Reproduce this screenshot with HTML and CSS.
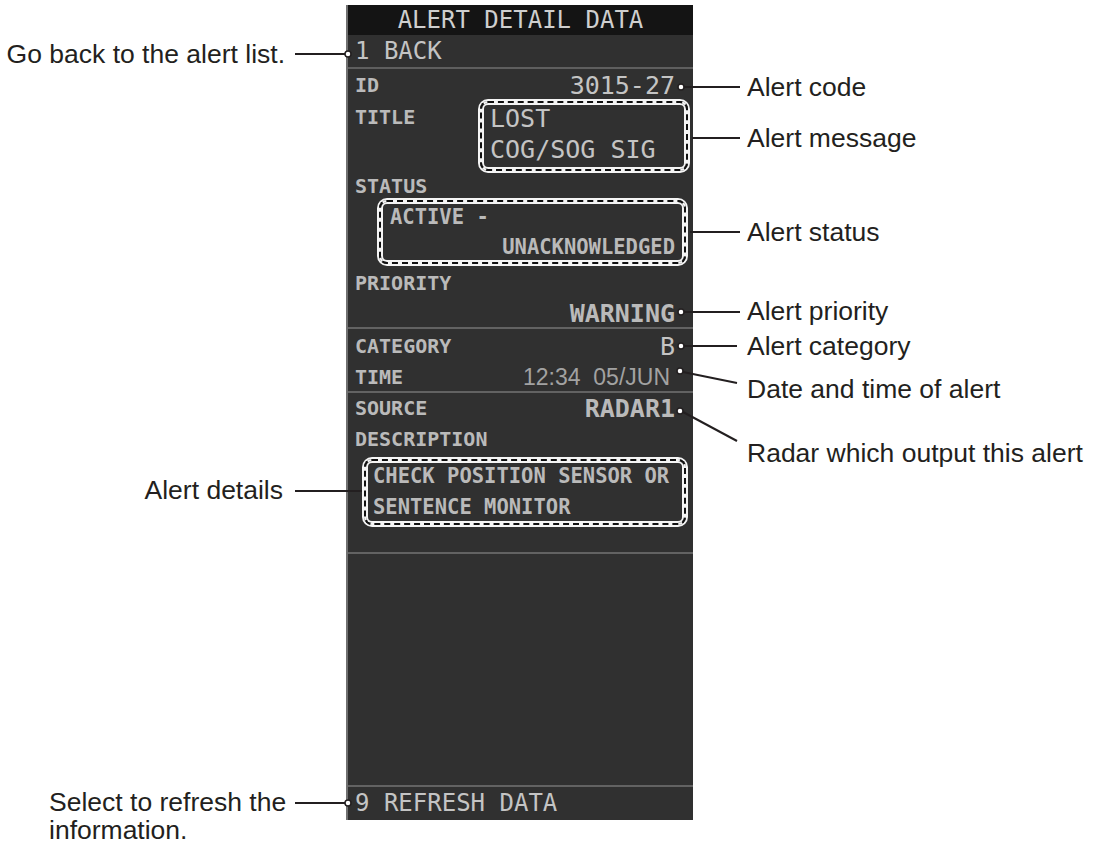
FILE: index.html
```html
<!DOCTYPE html>
<html lang="en">
<head>
    <meta charset="UTF-8">
    <meta name="viewport" content="width=device-width, initial-scale=1.0">
    <title>Alert Detail Data</title>
    <link rel="stylesheet" href="styles.css">
</head>
<body>
    <div class="diagram">
        <!-- left side notes -->
        <div class="notes notes-left">
            <p class="note note-back">Go back to the alert list.</p>
            <p class="note note-details">Alert details</p>
            <p class="note note-refresh">Select to refresh the<br>information.</p>
        </div>

        <!-- the alert panel -->
        <div class="panel">
            <div class="panel-title">ALERT DETAIL DATA</div>
            <div class="menu-item back-item">1 BACK</div>

            <div class="row row-id">
                <span class="label">ID</span>
                <span class="value">3015-27</span>
            </div>
            <div class="row row-title">
                <span class="label title-label">TITLE</span>
                <div class="marked title-box">
                    <div class="value-line">LOST</div>
                    <div class="value-line">COG/SOG SIG</div>
                </div>
            </div>

            <div class="row row-status"><span class="label">STATUS</span></div>
            <div class="marked status-box">
                <div class="small-line">ACTIVE -</div>
                <div class="small-line right">UNACKNOWLEDGED</div>
            </div>

            <div class="row row-priority"><span class="label">PRIORITY</span></div>
            <div class="row row-warning"><span></span><span class="value strong">WARNING</span></div>
            <div class="rule"></div>

            <div class="row row-category">
                <span class="label">CATEGORY</span>
                <span class="value">B</span>
            </div>
            <div class="row row-time">
                <span class="label">TIME</span>
                <span class="time">12:34  05/JUN</span>
            </div>
            <div class="rule"></div>

            <div class="row row-source">
                <span class="label">SOURCE</span>
                <span class="value strong">RADAR1</span>
            </div>
            <div class="row row-desc"><span class="label">DESCRIPTION</span></div>
            <div class="marked desc-box">
                <div class="small-line">CHECK POSITION SENSOR OR</div>
                <div class="small-line">SENTENCE MONITOR</div>
            </div>
            <div class="rule"></div>

            <div class="panel-space"></div>
            <div class="rule"></div>
            <div class="menu-item refresh-item">9 REFRESH DATA</div>
        </div>

        <!-- right side notes -->
        <div class="notes notes-right">
            <p class="note" style="top: 72px">Alert code</p>
            <p class="note" style="top: 123px">Alert message</p>
            <p class="note" style="top: 217px">Alert status</p>
            <p class="note" style="top: 296px">Alert priority</p>
            <p class="note" style="top: 331px">Alert category</p>
            <p class="note" style="top: 374px">Date and time of alert</p>
            <p class="note" style="top: 438px">Radar which output this alert</p>
        </div>

        <!-- leader lines -->
        <svg class="leaders" width="1100" height="846" viewBox="0 0 1100 846">
            <g stroke="#231f20" stroke-width="2" fill="none">
                <line x1="295" y1="54" x2="345" y2="54"/>
                <line x1="295" y1="491" x2="362" y2="491"/>
                <line x1="295" y1="803" x2="345" y2="803"/>
                <line x1="684" y1="87" x2="740" y2="87"/>
                <line x1="692" y1="138" x2="740" y2="138"/>
                <line x1="690" y1="232" x2="740" y2="232"/>
                <line x1="684" y1="312" x2="740" y2="312"/>
                <line x1="684" y1="346" x2="737" y2="346"/>
                <line x1="683" y1="372" x2="737" y2="383"/>
                <line x1="683" y1="412" x2="737" y2="441"/>
            </g>
            <g fill="#fff" stroke="#231f20" stroke-width="1.5">
                <circle cx="348" cy="54" r="3"/>
                <circle cx="348" cy="803" r="3"/>
                <circle cx="681" cy="87" r="3"/>
                <circle cx="681" cy="312" r="3"/>
                <circle cx="681" cy="346" r="3"/>
                <circle cx="680" cy="371" r="3"/>
                <circle cx="680" cy="411" r="3"/>
            </g>
        </svg>
    </div>
</body>
</html>
```

FILE: styles.css
```css
body {
    margin: 0;
    background-color: #fff;
    font-family: "Liberation Sans", Arial, sans-serif;
}

.diagram {
    position: relative;
    width: 1100px;
    height: 846px;
    display: grid;
    grid-template-columns: 346px 347px 1fr;
}

/* notes around the panel */
.notes {
    position: relative;
}

.note {
    position: absolute;
    margin: 0;
    font-size: 26.5px;
    line-height: 30px;
    color: #231f20;
    white-space: nowrap;
}

.note-back {
    top: 39px;
    right: 61px;
}

.note-details {
    top: 475px;
    right: 63px;
}

.note-refresh {
    top: 788px;
    left: 49px;
    line-height: 28px;
}

.notes-right .note {
    left: 54px;
}

.leaders {
    position: absolute;
    top: 0;
    left: 0;
    pointer-events: none;
}

/* panel */
.panel {
    margin-top: 5px;
    height: 815px;
    box-sizing: border-box;
    display: flex;
    flex-direction: column;
    background-color: #303030;
    border-left: 2px solid #707070;
    font-family: "DejaVu Sans Mono", monospace;
    color: #c4c4c4;
}

.panel-title {
    height: 30px;
    line-height: 30px;
    background-color: #141414;
    text-align: center;
    font-size: 24px;
    color: #cfcfcf;
}

.menu-item {
    height: 32px;
    line-height: 32px;
    padding-left: 7px;
    font-size: 24px;
    white-space: pre;
}

.back-item {
    border-bottom: 2px solid #5e5e5e;
}

.refresh-item {
    height: 33px;
    line-height: 33px;
}

.row {
    display: flex;
    justify-content: space-between;
    align-items: center;
    padding: 0 18px 0 7px;
    flex-shrink: 0;
}

.label {
    font-size: 20px;
    font-weight: bold;
    color: #bababa;
}

.value {
    font-size: 25px;
}

.strong {
    font-weight: bold;
    color: #bababa;
}

.time {
    font-family: "Liberation Sans", Arial, sans-serif;
    font-size: 23px;
    color: #a2a2a2;
    white-space: pre;
    margin-right: 5px;
}

.row-id { height: 32px; }
.row-status { height: 25px; }
.row-priority { height: 34px; }
.row-warning { height: 27px; }
.row-category { height: 34px; }
.row-time { height: 28px; }
.row-source { height: 30px; }
.row-desc { height: 32px; }

.row-title {
    align-items: flex-start;
    padding-right: 5px;
    padding-bottom: 2px;
}

.title-label {
    line-height: 32px;
}

.rule {
    height: 2px;
    flex-shrink: 0;
    background-color: #626262;
}

.panel-space {
    flex: 1;
}

/* dashed callout frames */
.marked {
    box-sizing: border-box;
    flex-shrink: 0;
    border: 2px dashed #111;
    border-radius: 8px;
    background: linear-gradient(#303030, #303030) padding-box, linear-gradient(#f4f4f4, #f4f4f4) border-box;
    box-shadow: 0 0 0 2px #f4f4f4, inset 0 0 0 2px #f4f4f4;
}

.title-box {
    width: 208px;
    height: 70px;
    padding: 0 8px;
}

.value-line {
    height: 31px;
    line-height: 31px;
    font-size: 25px;
}

.status-box {
    height: 64px;
    margin: 2px 7px 2px 31px;
    padding: 0 9px;
}

.status-box .small-line {
    height: 30px;
    line-height: 30px;
}

.desc-box {
    height: 66px;
    margin: 4px 7px 27px 16px;
    padding: 0 7px;
}

.small-line {
    height: 31px;
    line-height: 31px;
    font-size: 20.5px;
    font-weight: bold;
    color: #bababa;
    white-space: pre;
}

.right {
    text-align: right;
}
```
